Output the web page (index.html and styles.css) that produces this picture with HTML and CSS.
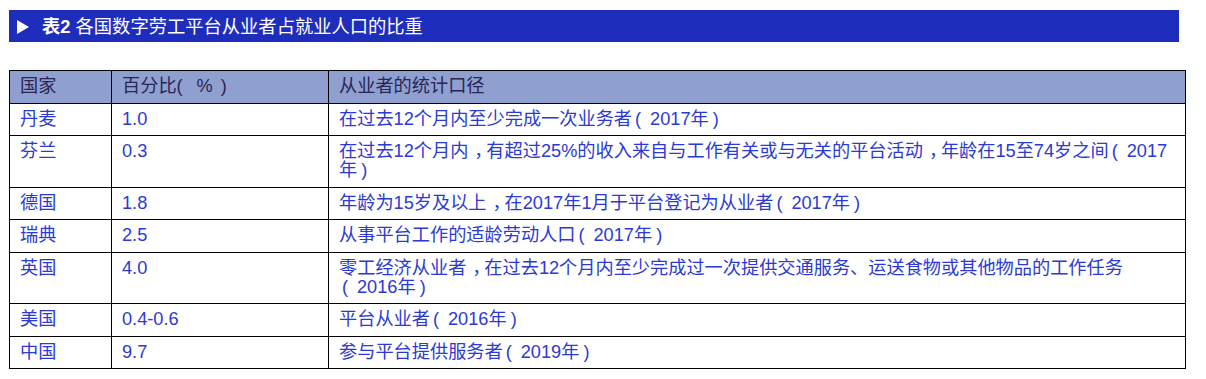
FILE: index.html
```html
<!DOCTYPE html>
<html lang="zh-CN">
<head>
<meta charset="utf-8">
<title>表2 各国数字劳工平台从业者占就业人口的比重</title>
<link rel="stylesheet" href="styles.css">
</head>
<body>
<div class="page">
  <div class="title-bar">
    <svg class="tri" width="12" height="14" viewBox="0 0 12 14"><polygon points="0,0 12,7 0,14" fill="#ffffff"/></svg>
    <span class="title-text"><b>表2</b> 各国数字劳工平台从业者占就业人口的比重</span>
  </div>
  <table class="data">
    <colgroup>
      <col class="c1"><col class="c2"><col class="c3">
    </colgroup>
    <thead>
      <tr><th>国家</th><th>百分比<span class="nw"><span class="op op-h">(</span>%<span class="cp cp-h">)</span></span></th><th>从业者的统计口径</th></tr>
    </thead>
    <tbody>
      <tr><td>丹麦</td><td>1.0</td><td>在过去12个月内至少完成一次业务者<span class="nw"><span class="op">(</span>2017</span>年<span class="cp">)</span></td></tr>
      <tr><td>芬兰</td><td>0.3</td><td>在过去12个月内<span class="cm">，</span>有超过25%的收入来自与工作有关或与无关的平台活动<span class="cm">，</span>年龄在15至74岁之间<span class="nw"><span class="op">(</span>2017</span>年<span class="cp">)</span></td></tr>
      <tr><td>德国</td><td>1.8</td><td>年龄为15岁及以上<span class="cm">，</span>在2017年1月于平台登记为从业者<span class="nw"><span class="op">(</span>2017</span>年<span class="cp">)</span></td></tr>
      <tr><td>瑞典</td><td>2.5</td><td>从事平台工作的适龄劳动人口<span class="nw"><span class="op">(</span>2017</span>年<span class="cp">)</span></td></tr>
      <tr><td>英国</td><td>4.0</td><td>零工经济从业者<span class="cm">，</span>在过去12个月内至少完成过一次提供交通服务、运送食物或其他物品的工作任务<span class="nw"><span class="op">(</span>2016</span>年<span class="cp">)</span></td></tr>
      <tr><td>美国</td><td>0.4-0.6</td><td>平台从业者<span class="nw"><span class="op">(</span>2016</span>年<span class="cp">)</span></td></tr>
      <tr><td>中国</td><td>9.7</td><td>参与平台提供服务者<span class="nw"><span class="op">(</span>2019</span>年<span class="cp">)</span></td></tr>
    </tbody>
  </table>
</div>
</body>
</html>
```
FILE: styles.css
```css
html, body {
  margin: 0;
  padding: 0;
  background: #ffffff;
}
body {
  font-family: "Liberation Sans", "Noto Sans CJK SC", sans-serif;
}
.page {
  padding: 10px 0 0 9px;
}
.title-bar {
  width: 1170px;
  height: 32px;
  background: #1f2dbd;
  display: flex;
  align-items: center;
  color: #ffffff;
  box-sizing: border-box;
  padding-left: 8px;
}
.tri {
  display: block;
  margin-right: 13px;
  margin-top: 1px;
}
.title-text {
  font-size: 18.3px;
  line-height: 20px;
  margin-top: 2px;
}
.title-text b {
  font-weight: bold;
}
.data {
  margin-top: 28px;
  border-collapse: collapse;
  width: 1176px;
  table-layout: fixed;
  font-size: 18.2px;
  line-height: 19px;
}
.c1 { width: 102px; }
.c2 { width: 217px; }
.c3 { width: 857px; }
.data th, .data td {
  border: 1px solid #000000;
  padding: 6px 10px 6.5px 10px;
  text-align: left;
  vertical-align: top;
}
.data th {
  background: #8e9fd0;
  color: #2a2555;
  font-weight: normal;
}
.data td {
  color: #2b3ad4;
}
.nw {
  white-space: nowrap;
}
.op {
  display: inline-block;
  width: 15px;
  padding-left: 3px;
}
.cp {
  display: inline-block;
  width: 14px;
  padding-left: 4px;
}
.op-h {
  width: 20px;
  padding-left: 0;
}
.cp-h {
  width: 12px;
  padding-left: 8px;
}
.cm {
  display: inline-block;
  width: 12px;
  padding-left: 6px;
}
```
